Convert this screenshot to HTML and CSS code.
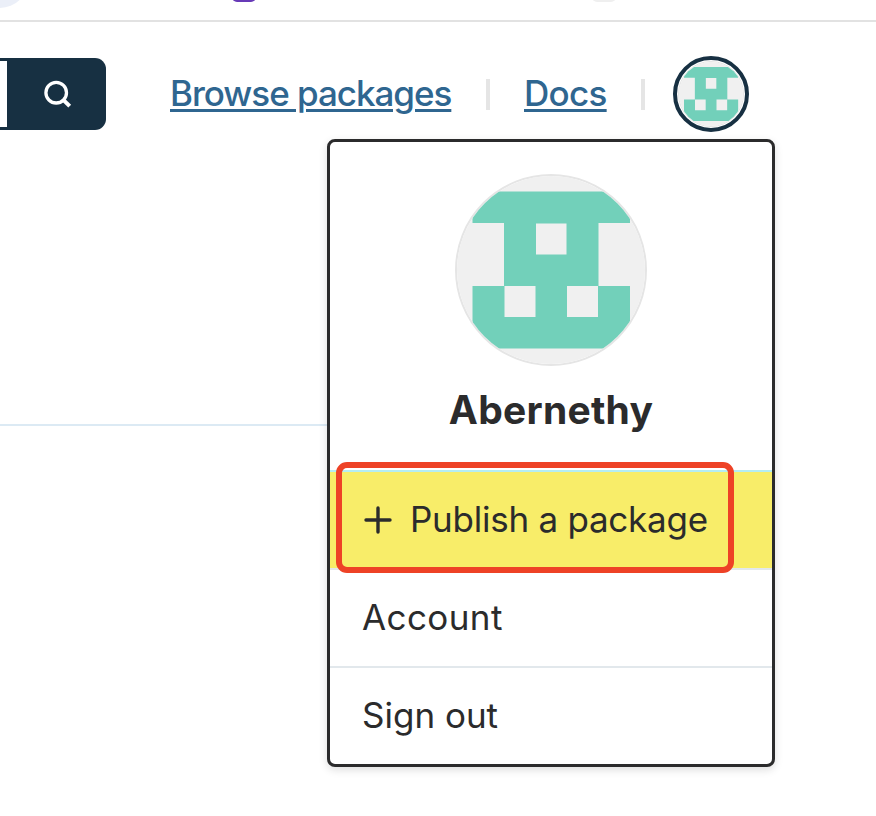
FILE: index.html
```html
<!DOCTYPE html>
<html lang="en">
<head>
<meta charset="utf-8">
<title>Packages</title>
<link rel="stylesheet" href="styles.css">
</head>
<body>
<svg width="0" height="0" class="defs" aria-hidden="true">
  <symbol id="identicon" viewBox="0 0 192 192">
    <path fill="#f0f0f0" d="M0 0h192v192H0z"/>
    <path fill="#72d0ba" fill-rule="evenodd" d="M17.5 17.5H175V49H143.5V112H175V174.5H17.5V112H49V49H17.5ZM81 49.5V80.5H111.5V49.5ZM49.5 112V143H80.500V112ZM112 112V143H143V112Z"/>
  </symbol>
</svg>
<div class="chrome">
  <span class="tab tab-round"></span>
  <span class="tab tab-purple"></span>
  <span class="tab tab-grey"></span>
</div>
<header class="header">
  <div class="search-box">
    <span class="field"></span>
    <button class="search" aria-label="Search">
      <svg width="30" height="30" viewBox="0 0 30 30" fill="none" stroke="#fff" stroke-width="3.300"><circle cx="14.200" cy="13.700" r="10.300"/><path d="M21.300 20.800L27.700 27.200" stroke-width="4"/></svg>
    </button>
  </div>
  <nav class="nav">
    <a class="link browse" href="#">Browse packages</a>
    <span class="separator"></span>
    <a class="link docs" href="#">Docs</a>
    <span class="separator"></span>
    <div class="account">
      <button class="avatar-button" aria-label="Account menu"><span class="avatar-small"><svg><use href="#identicon"/></svg></span></button>
      <div class="menu">
        <div class="profile">
          <div class="avatar"><svg><use href="#identicon"/></svg></div>
          <div class="name">Abernethy</div>
        </div>
        <a class="item publish"><svg class="plus" width="28" height="28" viewBox="0 0 28 28" fill="none" stroke="#2b2b2c" stroke-width="3.400" stroke-linecap="round"><path d="M2 14H26M14 2V26"/></svg><span>Publish a package</span></a>
        <a class="item account-link"><span>Account</span></a>
        <a class="item signout"><span>Sign out</span></a>
        <div class="highlight"></div>
      </div>
    </div>
  </nav>
</header>
<div class="rule"></div>
</body>
</html>
```
FILE: styles.css
```css
* { box-sizing: border-box; }
body {
  margin: 0;
  height: 816px;
  overflow: hidden;
  background: #fff;
  color: #2b2b2c;
  font-family: Inter, "Liberation Sans", sans-serif;
}
button { padding: 0; border: 0; }
.defs { position: absolute; }
.chrome {
  position: relative;
  height: 22px;
  overflow: hidden;
  border-bottom: 2px solid #e2e2e2;
}
.tab { position: absolute; bottom: 18px; width: 24px; height: 24px; border-radius: 5px; }
.tab-round { left: -28px; bottom: 12px; width: 56px; height: 56px; border-radius: 50%; background: #ebeff8; }
.tab-purple { left: 232px; background: #673ab7; }
.tab-grey { left: 592px; background: #efefef; }
.header { display: flex; align-items: center; height: 144px; }
.search-box {
  display: flex;
  align-items: center;
  width: 106px;
  height: 72px;
  border-radius: 0 11px 11px 0;
  background: #173042;
}
.field { width: 7px; height: 66px; background: #fff; }
.search { display: flex; margin-left: 35px; background: none; }
.nav { display: flex; align-items: center; margin-left: 64px; }
.link {
  color: #2f6690;
  font-size: 35px;
  font-weight: 500;
  line-height: 48px;
  padding-bottom: 2px;
  white-space: nowrap;
  text-decoration-thickness: 3px;
  text-underline-offset: 3px;
}
.browse { width: 282px; letter-spacing: -1.03px; }
.docs { width: 83px; letter-spacing: -.7px; }
.separator { width: 4px; height: 31px; margin: 0 34px; background: #e5e5e5; }
.separator:last-of-type { margin-right: 28px; }
.account { position: relative; }
.avatar-button {
  display: flex;
  width: 76px;
  height: 76px;
  padding: 1px;
  border: 4px solid #173042;
  border-radius: 50%;
  background: #fff;
}
.avatar-small { width: 66px; height: 66px; overflow: hidden; border: 1px solid #e5e5e5; border-radius: 50%; }
.avatar-small svg { display: block; width: 66px; height: 66px; margin: -1px; }
.menu {
  position: absolute;
  top: 83px;
  right: -26px;
  width: 448px;
  height: 628px;
  border: 3px solid #2b2b2c;
  border-radius: 8px;
  background: #fff;
  box-shadow: 0 3px 9px rgb(0 0 0 / 13%);
}
.profile { display: flex; flex-direction: column; align-items: center; height: 328px; padding-top: 32px; }
.avatar { width: 192px; height: 192px; overflow: hidden; border: 2px solid #e5e5e5; border-radius: 50%; }
.avatar svg { display: block; width: 192px; height: 192px; margin: -2px; }
.name { margin-top: 19px; font-size: 39px; font-weight: 700; line-height: 50px; letter-spacing: .25px; }
.item {
  display: flex;
  align-items: center;
  height: 98px;
  padding: 0 0 2px 32px;
  border-top: 2px solid #e2e8ec;
  font-size: 35px;
  line-height: 48px;
  white-space: nowrap;
}
.publish { border-top-color: #b5edf3; background: #f8ed69; background-clip: padding-box; }
.plus { margin: 1px 18px 0 2px; }
.publish span { letter-spacing: -.25px; }
.account-link span { letter-spacing: .4px; }
.highlight {
  position: absolute;
  top: 320.4px;
  left: 6px;
  width: 398px;
  height: 111px;
  border: 6px solid #ee4226;
  border-radius: 11px;
}
.rule { width: 327px; height: 2px; margin-top: 258px; background: #dceaf4; }
```
